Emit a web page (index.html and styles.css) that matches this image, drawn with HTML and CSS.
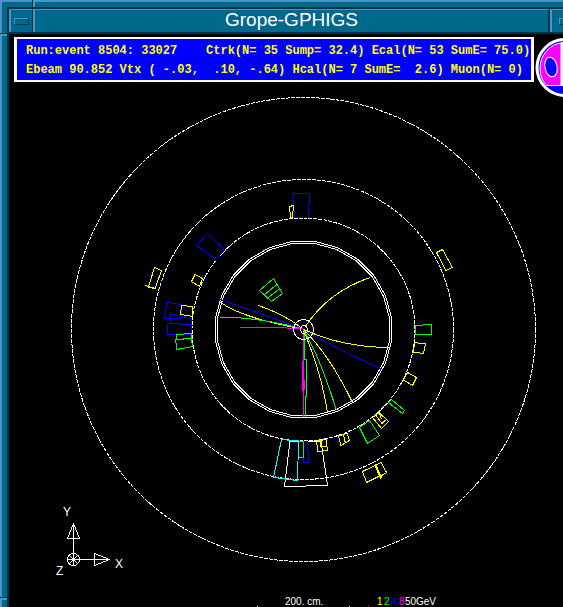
FILE: index.html
```html
<!DOCTYPE html>
<html lang="en">
<head>
<meta charset="utf-8">
<title>Grope-GPHIGS</title>
<link rel="stylesheet" href="styles.css">
</head>
<body>
<div class="window">
  <span class="notch notch-top"></span>
  <span class="notch notch-left"></span>
  <span class="notch notch-left notch-low"></span>
  <header class="titlebar">
    <button class="tb-button menu" aria-label="Window menu"><span class="bar"></span></button>
    <h1 class="title">Grope-GPHIGS</h1>
    <button class="tb-button minimize" aria-label="Minimize"><span class="dot"></span></button>
  </header>
  <main class="content">
    <section class="banner">
      <p>Run:event 8504: 33027    Ctrk(N= 35 Sump= 32.4) Ecal(N= 53 SumE= 75.0)</p>
      <p>Ebeam 90.852 Vtx ( -.03,  .10, -.64) Hcal(N= 7 SumE=  2.6) Muon(N= 0)</p>
    </section>
    <svg class="logo" viewBox="533 37 30 62" aria-hidden="true">
      <circle cx="565" cy="67.500" r="28" fill="#00f" stroke="#fff" stroke-width="3"/>
      <path d="M561 43C551 44 540 54 540 68C540 76 543 82 547 85.500H561Z" fill="#f0f" stroke="#fff"/>
      <ellipse cx="551" cy="67" rx="6" ry="10" fill="#00f" stroke="#fff" transform="rotate(-12 551 67)"/>
      <path d="M562 42V86" stroke="#fff" stroke-width="2"/>
    </svg>
    <svg class="display" viewBox="9 84 554 523" preserveAspectRatio="xMinYMin meet" role="img" aria-label="Event display">
      <defs>
        <path id="ring" d="M87 -11.500V11.500L81 33.500L69.500 53.500L53.500 69.500L33.500 81L11.500 87H-11.500L-33.500 81L-53.500 69.500L-69.500 53.500L-81 33.500L-87 11.500V-11.500L-81 -33.500L-69.500 -53.500L-53.500 -69.500L-33.500 -81L-11.500 -87H11.500L33.500 -81L53.500 -69.500L69.500 -53.500L81 -33.500Z"/>
      </defs>
      <g class="w">
        <g class="dashed">
          <circle cx="303.500" cy="329.500" r="232"/>
          <circle cx="303.500" cy="329.500" r="150"/>
          <circle cx="303.500" cy="329.500" r="111.500"/>
        </g>
        <use href="#ring" class="ring" x="303.500" y="329.500"/>
        <use href="#ring" class="gap" x="303.500" y="329.500"/>
        <path d="M290 441H321L327.500 485.500L284.500 486.500Z"/>
      </g>

      <g class="b">
        <path d="M293 194L309.500 193.500L308.500 217.500H294.500Z"/>
        <path d="M207.500 233.500L224.500 250L216.500 259.500L196.500 245.500Z"/>
        <path d="M167 302.500L182 304.500L181 318.500H164.500Z"/>
        <path d="M170.500 313.500L191.500 319V324.500L170.500 323.500Z"/>
        <path d="M167.500 323.500L191.500 324.500V334.500H167.500Z"/>
        <path d="M303.500 441.500H307.500L308.500 462.500H303.500Z"/>
        <path d="M220.500 299.500L303 329Q340 351 381.500 369"/>
      </g>

      <g class="y">
        <path d="M289.500 206.500L293.500 205.500L292.500 217.500H290.500Z"/>
        <path d="M154.500 267.500L161.500 270.500L155 289L148.500 287ZM145.500 285.500L155 288.500"/>
        <path d="M195 274.500L202.500 278.500L199.500 286.500L191.500 281.500Z"/>
        <path d="M181.500 305.500L193 306.500L192.500 316.500L180.500 314.500Z"/>
        <path d="M436.500 252.500L442.500 249.500L452.500 267.500L446 270.500Z"/>
        <path d="M414.500 342.500L425.500 344L423.500 353.500L413.500 352Z"/>
        <path d="M407.500 372.500L416.500 377.500L412.500 385.500L403.500 380Z"/>
        <path d="M379 412.500L388.500 421.500L381.500 428.500L372.500 417.500ZM376 415.500L382 423.500L385.500 420M379.500 413.500L381.500 419.500"/>
        <path d="M338.500 436L347 433.500L349.500 440.500L341 445.500ZM343.500 435L345.500 443.500"/>
        <path d="M316.500 441L326 439.500L327.500 450.500L318 451.500ZM320.500 441V446H326.500"/>
        <path d="M362.500 471.500L375 465.500L379.500 476L366.500 482.500ZM375.500 465L381 462.500L386.500 472.500L380 476.500"/>
        <path class="thick" d="M375.500 465.500L381.500 478.500"/>
        <path d="M305 327Q328 292 370 277.500"/>
        <path d="M258.500 305.500Q286 315 303 329"/>
        <path d="M220.500 302.500Q245 319 303 329"/>
        <path d="M303 329Q340 347 389.500 347.500"/>
        <path d="M303 329Q329 354 352.500 402.500"/>
        <path d="M303 329Q322 374 327.500 413.500"/>
      </g>

      <g class="g">
        <path d="M176.500 334.500L191.500 333.500V338.500L176 339.500ZM175.500 339.500L191.500 338.500L192.500 346.500L177 349.500Z"/>
        <path d="M273.500 278.500L282.500 293.500L271.500 301.500L259.500 290.500ZM277 284.500L264.500 294.500M280 288.500L267.500 298"/>
        <path d="M415.500 325.500H422.500L423.500 324.500H431.500V334.500H415.500Z"/>
        <path d="M391.500 399.500L404.500 410.500L402.500 413.500L388.500 402.500Z"/>
        <path d="M369.500 420.500L379.500 435.500L367.500 443.500L359.500 427.500Z"/>
        <path d="M298.500 441.500H303.500V457.500H298.500Z"/>
        <path d="M220 317Q258 317 303 329Q320 357 336.500 410.500"/>
        <path d="M304.500 331V359.500H306.500V396.500H305.500V417"/>
      </g>

      <path class="c" d="M281.500 439.500L298.500 441L297.500 480.500L273.500 477.500Z"/>
      <path class="m" d="M240 327.500H270L303.500 328.500M303.500 332V417M302.500 361V391M304.500 380V390"/>

      <g class="w">
        <circle cx="303.500" cy="329.500" r="10"/>
        <path d="M302.500 325.500H305.500L307.500 328.500V331.500L304.500 333.500H302.500L300.500 330.500V328.500Z"/>
        <path d="M73.500 559.500V523.500L67.500 538.500H79.500L73.500 523.500"/>
        <path d="M73.500 559.500H109.500L94.500 553.500V565.500L109.500 559.500"/>
        <circle cx="73.500" cy="559.500" r="6"/>
        <path d="M67.500 559.500H73.500V565.500M69.500 555.500L77.500 563.500M77.500 555.500L69.500 563.500"/>
        <path d="M257 606.500H258M349 606.500H350"/>
      </g>
      <path class="r" d="M368 606.500H369"/>

      <g class="label">
        <text x="63" y="516">Y</text>
        <text x="115" y="568">X</text>
        <text x="56" y="575">Z</text>
      </g>
      <g class="label scale">
        <text x="285" y="605">200. cm.</text>
        <text x="377" y="605"><tspan fill="#ff0">1</tspan><tspan x="384" fill="#0f0">2</tspan><tspan x="391" fill="#00f">4</tspan><tspan x="399" fill="#f0f">8</tspan><tspan x="405">50</tspan></text>
        <text x="416" y="605">GeV</text>
      </g>
    </svg>
  </main>
</div>
</body>
</html>
```

FILE: styles.css
```css
:root {
  --teal: #00688b;
  --light: #4a94c8;
  --dark: #003346;
}

* { box-sizing: border-box; }

body {
  margin: 0;
  background: #000;
}

.window {
  position: relative;
  min-height: 100vh;
  padding: 7px 0 0 7px;
  background: var(--teal);
  box-shadow: inset 2px 2px 0 var(--light);
}

/* Grooves that mark the resize corners of the frame */
.notch {
  position: absolute;
  border: 0 solid var(--light);
}

.notch-top {
  top: 0;
  left: 32px;
  width: 3px;
  height: 7px;
  background: var(--dark);
  border-right-width: 2px;
}

.notch-left {
  top: 33px;
  left: 0;
  width: 7px;
  height: 3px;
  background: var(--dark);
  border-bottom-width: 2px;
}

.notch-low {
  top: auto;
  bottom: 7px;
}

.titlebar {
  display: flex;
  height: 27px;
  border: solid var(--dark);
  border-width: 2px 0 2px 2px;
}

.tb-button,
.title {
  margin: 0;
  background: var(--teal);
  border: solid var(--light);
  border-width: 1px 0 0 2px;
}

.tb-button {
  display: flex;
  align-items: center;
  justify-content: center;
  padding: 0;
}

.menu {
  width: 24px;
  border-right: 1px solid var(--dark);
}

.minimize {
  width: 13px;
  padding-left: 7px;
  overflow: hidden;
}

.bar {
  width: 15px;
  height: 7px;
  border: 1px solid;
  border-color: var(--light) var(--dark) var(--dark) var(--light);
}

.dot {
  width: 6px;
  height: 7px;
  border: solid var(--light);
  border-width: 1px 0 0 1px;
  border-bottom: 1px solid var(--dark);
}

.title {
  flex: 1;
  border-right: 2px solid var(--dark);
  color: #fff;
  font: 19px/20px "Liberation Sans", Arial, sans-serif;
  text-align: center;
}

.content {
  position: relative;
  padding-top: 3px;
  border-left: 2px solid var(--dark);
  background: #000;
}

.banner {
  margin: 0 29px 2px 5px;
  padding: 2px 0 1px 9px;
  border: solid #fff;
  border-width: 2px 3px;
  background: #00f;
  color: #ff0;
  font: bold 12px/20px "Liberation Mono", "Courier New", monospace;
}

.banner p {
  margin: 0;
  height: 19px;
  white-space: pre;
}

.logo {
  position: absolute;
  top: 3px;
  right: 0;
  width: 30px;
  height: 62px;
}

.display {
  display: block;
  width: 100%;
  shape-rendering: crispEdges;
}

.display path,
.display circle { fill: none; }

.w { stroke: #fff; }
.b { stroke: #00f; }
.y { stroke: #ff0; }
.g { stroke: #0f0; }
.c { stroke: #0ff; }
.m { stroke: #f0f; }
.r { stroke: #f00; }

.dashed { stroke-dasharray: 4 1; }
.ring { stroke-width: 3px; }
.gap { stroke: #000; }
.thick { stroke-width: 2px; }

.label {
  fill: #fff;
  font: 12px "Liberation Sans", Arial, sans-serif;
}

.scale { font-size: 10px; }
```
